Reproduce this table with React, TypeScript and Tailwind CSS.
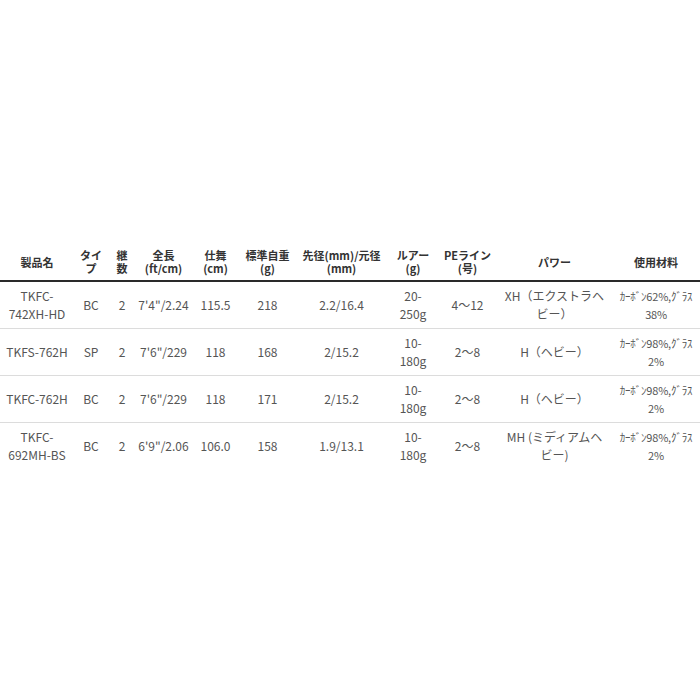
import React from "react";

const widths = [74, 34, 28, 55, 49, 55, 93, 50, 59, 115, 88];

const headers: React.ReactNode[] = [
  "製品名",
  <>タイ<br />プ</>,
  <>継<br />数</>,
  <>全長<br />(ft/cm)</>,
  <>仕舞<br />(cm)</>,
  <>標準自重<br />(g)</>,
  <>先径(mm)/元径<br />(mm)</>,
  <>ルアー<br />(g)</>,
  <>PEライン<br />(号)</>,
  "パワー",
  "使用材料",
];

const rows: React.ReactNode[][] = [
  [
    <>TKFC-<br />742XH-HD</>,
    "BC",
    "2",
    `7'4"/2.24`,
    "115.5",
    "218",
    "2.2/16.4",
    <>20-<br />250g</>,
    "4～12",
    <>XH（エクストラヘ<br />ビー）</>,
    <>ｶｰﾎﾞﾝ62%,ｸﾞﾗｽ<br />38%</>,
  ],
  [
    "TKFS-762H",
    "SP",
    "2",
    `7'6"/229`,
    "118",
    "168",
    "2/15.2",
    <>10-<br />180g</>,
    "2～8",
    "H（ヘビー）",
    <>ｶｰﾎﾞﾝ98%,ｸﾞﾗｽ<br />2%</>,
  ],
  [
    "TKFC-762H",
    "BC",
    "2",
    `7'6"/229`,
    "118",
    "171",
    "2/15.2",
    <>10-<br />180g</>,
    "2～8",
    "H（ヘビー）",
    <>ｶｰﾎﾞﾝ98%,ｸﾞﾗｽ<br />2%</>,
  ],
  [
    <>TKFC-<br />692MH-BS</>,
    "BC",
    "2",
    `6'9"/2.06`,
    "106.0",
    "158",
    "1.9/13.1",
    <>10-<br />180g</>,
    "2～8",
    <>MH (ミディアムヘ<br />ビー)</>,
    <>ｶｰﾎﾞﾝ98%,ｸﾞﾗｽ<br />2%</>,
  ],
];

export default function App() {
  return (
    <div
      className="w-[700px] h-[700px] bg-white pt-[244px]"
      style={{ fontFamily: '"Noto Sans CJK JP", "Noto Sans", sans-serif' }}
    >
      <table className="w-[700px] table-fixed border-collapse">
        <colgroup>
          {widths.map((w, i) => (
            <col key={i} style={{ width: w }} />
          ))}
        </colgroup>
        <thead>
          <tr className="border-b-2 border-[#2a2a2a]">
            {headers.map((h, i) => (
              <th
                key={i}
                className="px-0 py-[5px] text-center align-middle text-[11px] leading-[13px] font-bold text-[#333] whitespace-nowrap"
              >
                {h}
              </th>
            ))}
          </tr>
        </thead>
        <tbody>
          {rows.map((r, ri) => (
            <tr key={ri} className={ri < rows.length - 1 ? "border-b border-[#dcdcdc]" : ""}>
              {r.map((c, ci) => (
                <td
                  key={ci}
                  className={
                    ci === 10
                      ? "px-0 py-[5px] h-[47px] text-center align-middle text-[11px] tracking-[-0.2px] leading-[18px] text-[#555] whitespace-nowrap"
                      : "px-0 py-[5px] h-[47px] text-center align-middle text-[12px] leading-[18px] text-[#555] whitespace-nowrap"
                  }
                >
                  {c}
                </td>
              ))}
            </tr>
          ))}
        </tbody>
      </table>
    </div>
  );
}
